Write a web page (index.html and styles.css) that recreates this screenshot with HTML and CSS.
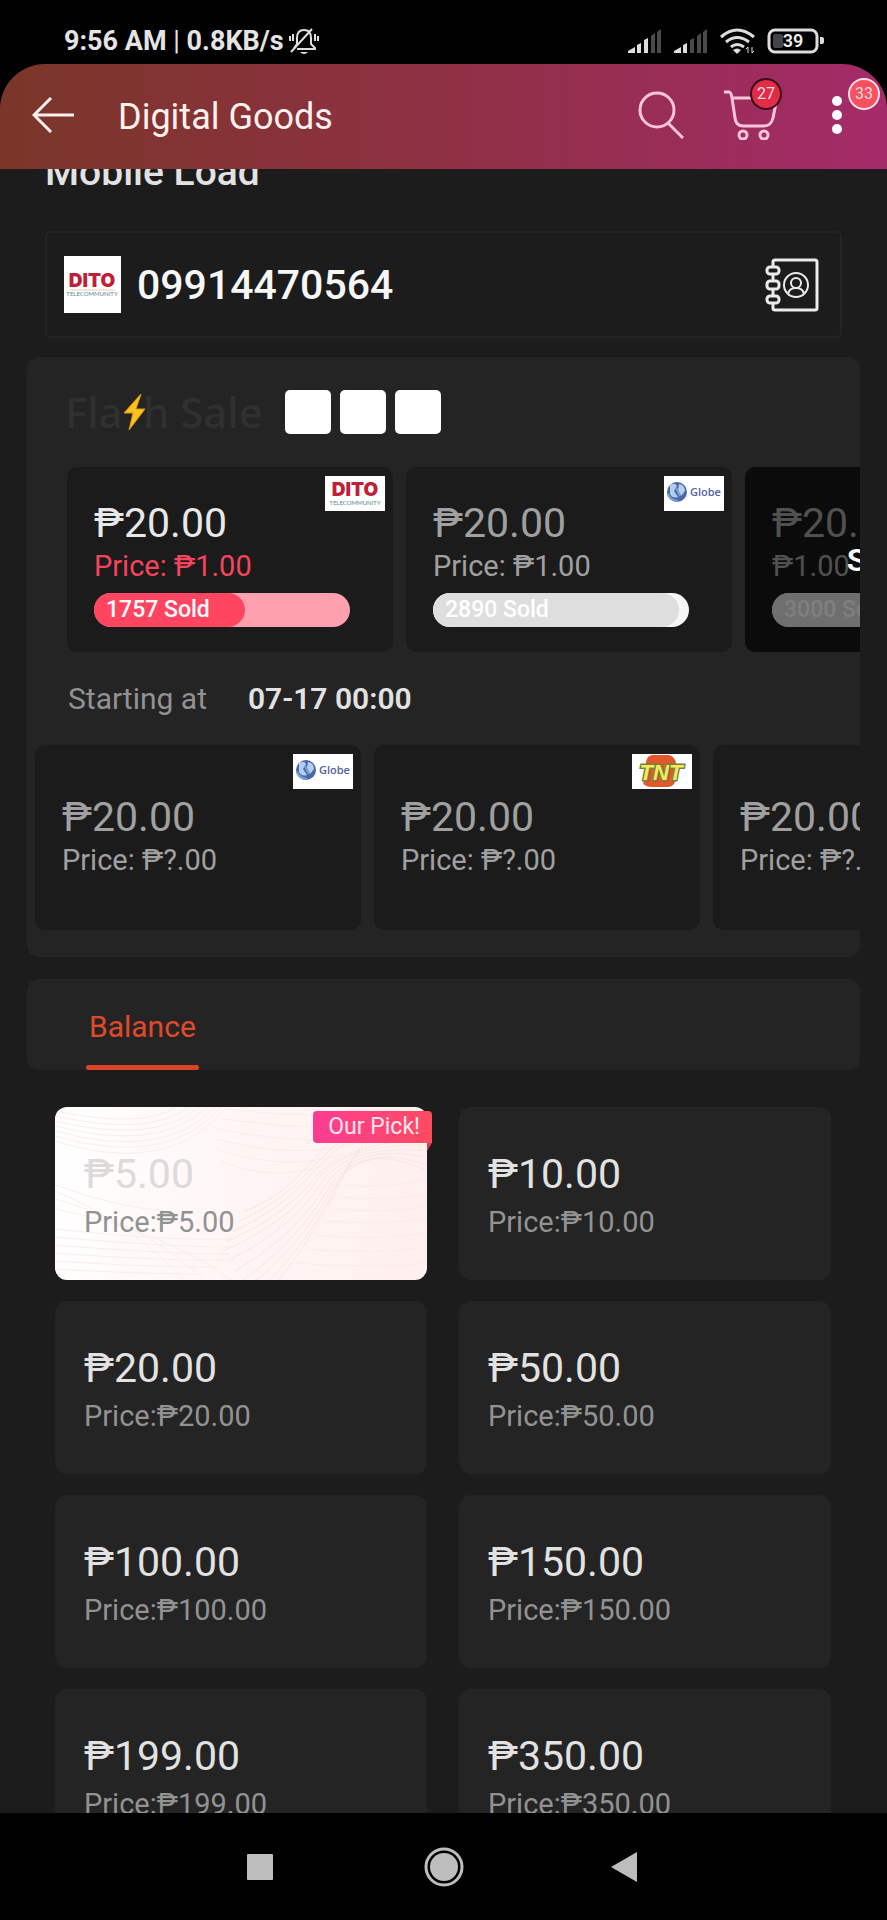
FILE: index.html
```html
<!DOCTYPE html>
<html lang="en">
<head>
<meta charset="utf-8">
<meta name="viewport" content="width=device-width, initial-scale=1">
<title>Digital Goods</title>
<link rel="stylesheet" href="styles.css">
</head>
<body>
<div class="status">
  <div class="status-side">
    <span class="clock">9:56 AM <span class="bar">|</span> 0.8KB/s</span>
    <svg width="30" height="28" viewBox="0 0 30 28" fill="none" stroke="#ddd" stroke-width="2">
      <path d="M5 21l3-4v-6q0-8 7-8t7 8v6l4 4v1H8M2 25L23 2M1 9v5M4 7v7M26 7v7M29 9v5"/>
      <path d="M11 25q4 4 8 0z" fill="#ddd" stroke="none"/>
    </svg>
  </div>
  <div class="status-side status-right">
    <svg width="34" height="24" viewBox="0 0 34 24">
      <path d="M0 24v-2l7-4v6zM9 24v-8l4-2v10zM16 24V11l4-2v15z" fill="#ddd"/>
      <path d="M23 24V7l4-3v20zM29 24V3l4-3v24z" fill="#4a4a4a"/>
    </svg>
    <svg width="34" height="24" viewBox="0 0 34 24">
      <path d="M0 24v-2l7-4v6zM9 24v-8l4-2v10z" fill="#ddd"/>
      <path d="M16 24V11l4-2v15zM23 24V7l4-3v20zM29 24V3l4-3v24z" fill="#4a4a4a"/>
    </svg>
    <svg width="35" height="26" viewBox="0 0 35 26" fill="none" stroke="#ddd" stroke-width="3">
      <path d="M1 9Q17-5 34 9M6 14q11-9 23 0M11 19q6-5 13 0"/>
      <path d="M13 22q4-3 8 0l-4 4z" fill="#ddd" stroke="none"/>
      <path d="M28 25v-6l-2 2M32 19v6l2-2" stroke-width="1"/>
    </svg>
    <svg width="57" height="26" viewBox="0 0 57 26">
      <rect x="2" y="2" width="48" height="22" rx="6" fill="none" stroke="#ddd" stroke-width="3"/>
      <rect x="6" y="6" width="10" height="14" rx="2" fill="#444"/>
      <path d="M53 9h2q2 0 2 2v3q0 2-2 2h-2z" fill="#ddd"/>
      <text class="battery" x="26" y="19" text-anchor="middle">39</text>
    </svg>
  </div>
</div>

<header class="header">
  <button class="icon-btn" aria-label="Back">
    <svg width="42" height="36" viewBox="0 0 42 36" fill="none" stroke="#fff0ee" stroke-width="3"><path d="M42 18H2M19 1L2 18l17 17"/></svg>
  </button>
  <h1 class="page-title">Digital Goods</h1>
  <button class="icon-btn" aria-label="Search">
    <svg width="46" height="48" viewBox="0 0 46 48" fill="none" stroke="#ffc4da" stroke-width="3"><circle cx="19" cy="19" r="17"/><path d="M30 32l15 15"/></svg>
  </button>
  <button class="icon-btn cart" aria-label="Cart">
    <svg width="54" height="50" viewBox="0 0 54 50" fill="none" stroke="#ffc4da" stroke-width="3"><path d="M0 2h5q2 0 3 6h45l-4 20q-2 8-9 8H19q-7 0-8-8L8 8"/><circle cx="19" cy="45" r="4"/><circle cx="40" cy="45" r="4"/></svg>
    <span class="badge badge-dark">27</span>
  </button>
  <button class="icon-btn more" aria-label="More">
    <svg width="10" height="38" viewBox="0 0 10 38" fill="#fff"><circle cx="5" cy="5" r="5"/><circle cx="5" cy="19" r="5"/><circle cx="5" cy="33" r="5"/></svg>
    <span class="badge badge-light">33</span>
  </button>
</header>

<main class="content">
  <h2 class="section-title"><label for="phone">Mobile Load</label></h2>
  <div class="phone-box">
    <svg class="phone-logo" viewBox="0 0 57 57" role="img" aria-label="DITO">
      <rect width="57" height="57" fill="#fff"/>
      <text class="dito-name" x="28" y="31" text-anchor="middle">DITO</text>
      <path d="M6 34h45" stroke="#f0c9a8"/>
      <text class="dito-sub" x="28" y="40" text-anchor="middle">TELECOMMUNITY</text>
    </svg>
    <input class="phone" id="phone" type="tel" value="09914470564">
    <button class="icon-btn" aria-label="Contacts">
      <svg width="54" height="54" viewBox="0 0 54 54" fill="none" stroke="#ebebeb" stroke-width="3">
        <path d="M8 8V4q0-2 2-2h40q2 0 2 2v46q0 2-2 2H10q-2 0-2-2v-4M8 16v6M8 31v6"/>
        <rect x="2" y="9" width="12" height="7" rx="3"/><rect x="2" y="23" width="12" height="8" rx="3"/><rect x="2" y="38" width="12" height="7" rx="3"/>
        <circle cx="31" cy="27" r="12" stroke-width="2"/><circle cx="31" cy="25" r="5" stroke-width="2"/><path d="M23 36q1-6 8-6t8 6" stroke-width="2"/>
      </svg>
    </button>
  </div>

  <section class="flash">
    <div class="flash-head">
      <h2 class="flash-title">Fla<span class="bolt-slot">s<svg class="bolt" width="24" height="38" viewBox="0 0 24 38"><path d="M18 1L1 20h9L6 37 22 16h-9z" fill="#fcc21b" stroke="#d99a17" stroke-width="1"/></svg></span>h Sale</h2>
      <div class="timer"><span></span><span></span><span></span></div>
    </div>
    <div class="deals deals-now">
      <button class="deal hot">
        <svg class="brand" viewBox="0 0 60 35" role="img" aria-label="DITO">
          <rect width="60" height="35" fill="#fff"/>
          <text class="dito-name" x="30" y="20" text-anchor="middle">DITO</text>
          <text class="dito-sub" x="30" y="29" text-anchor="middle">TELECOMMUNITY</text>
        </svg>
        <span class="amount">₱20.00</span><span class="price">Price: ₱1.00</span>
        <span class="sold"><span class="sold-fill" style="width:59%"></span><span class="sold-text">1757 Sold</span></span>
      </button>
      <button class="deal">
        <svg class="brand" viewBox="0 0 60 35" role="img" aria-label="Globe">
          <rect width="60" height="35" fill="#fff"/>
          <circle cx="13" cy="16" r="10" fill="#4a68a8"/>
          <path d="M6 9q5-3 7 1l-3 5 4 6q-5 2-8-3zM15 8q6 1 6 7l-4 5-3-6z" fill="#b4cdec"/>
          <path d="M4 18q3 7 10 7M12 12l4 8" fill="none" stroke="#7c9fd2" stroke-width="2"/>
          <text class="globe-name" x="26" y="20">Globe</text>
        </svg>
        <span class="amount">₱20.00</span><span class="price">Price: ₱1.00</span>
        <span class="sold"><span class="sold-fill" style="width:96%"></span><span class="sold-text">2890 Sold</span></span>
      </button>
      <button class="deal" disabled>
        <span class="amount">₱20.00</span><span class="price">₱1.00</span>
        <span class="sold"><span class="sold-fill" style="width:100%"></span><span class="sold-text">3000 Sold</span></span>
        <span class="sold-out"><span>Sold Out</span></span>
      </button>
    </div>
    <p class="starting">Starting at <strong>07-17 00:00</strong></p>
    <div class="deals deals-next">
      <button class="deal">
        <svg class="brand" viewBox="0 0 60 35" role="img" aria-label="Globe">
          <rect width="60" height="35" fill="#fff"/>
          <circle cx="13" cy="16" r="10" fill="#4a68a8"/>
          <path d="M6 9q5-3 7 1l-3 5 4 6q-5 2-8-3zM15 8q6 1 6 7l-4 5-3-6z" fill="#b4cdec"/>
          <path d="M4 18q3 7 10 7M12 12l4 8" fill="none" stroke="#7c9fd2" stroke-width="2"/>
          <text class="globe-name" x="26" y="20">Globe</text>
        </svg>
        <span class="amount">₱20.00</span><span class="price">Price: ₱?.00</span>
      </button>
      <button class="deal">
        <svg class="brand" viewBox="0 0 60 35" role="img" aria-label="TNT">
          <rect width="60" height="35" fill="#fff"/>
          <path d="M20 1h17q7 2 7 10v14q-1 7-8 8H19q-7-1-8-4l2-3 1-18q1-6 6-7z" fill="#e2572b"/>
          <text class="tnt-name" x="29" y="26" text-anchor="middle">TNT</text>
        </svg>
        <span class="amount">₱20.00</span><span class="price">Price: ₱?.00</span>
      </button>
      <button class="deal"><span class="amount">₱20.00</span><span class="price">Price: ₱?.00</span></button>
    </div>
  </section>

  <nav class="tabs"><button class="tab">Balance</button></nav>

  <section class="loads">
    <button class="load pick">
      <svg class="waves" viewBox="0 0 372 173" preserveAspectRatio="none" fill="none">
        <g stroke="#faece8">
          <path d="M0 4Q90 22 120 0M0 9Q95 30 134 0M0 14Q100 38 144 0M0 19Q105 46 152 0M0 24Q110 54 160 0M0 29Q112 62 166 0M0 34Q115 70 172 0"/>
          <path d="M172 2Q270 14 372 4M168 12Q270 28 372 14M164 22Q260 42 340 26M162 32Q240 54 310 34M162 42Q230 66 290 46M166 54Q220 76 270 58"/>
          <path d="M0 78Q60 100 110 104M0 84Q70 112 130 173M0 92Q90 118 150 173M0 102Q110 124 176 173M0 122Q110 134 180 132M0 130Q110 140 180 140M0 138Q110 147 176 147M0 146Q110 154 170 153M0 154Q110 161 164 160M0 162Q90 167 150 167"/>
          <path d="M290 78Q330 82 372 72M284 90Q330 94 372 88M276 102Q330 106 372 100M268 114Q330 118 372 112M260 128Q320 134 372 126M250 142Q320 148 372 140M240 156Q320 162 372 156"/>
        </g>
        <g stroke="#f7dfdd" stroke-dasharray="3 1">
          <path d="M190 104Q222 92 246 66T280 30M184 114Q222 98 250 68T292 30M178 124Q224 104 254 70T304 30M172 134Q228 110 258 73T372 32M168 144Q232 116 260 76T372 38M172 154Q236 122 264 79T372 44M180 164Q240 128 268 82T372 50M188 173Q242 134 272 84T372 58M202 173Q246 136 276 84T372 64M214 173Q252 136 280 82T330 30M224 173Q258 130 284 78T320 30"/>
        </g>
      </svg>
      <span class="ribbon">Our Pick!</span>
      <span class="amount">₱5.00</span><span class="price">Price:₱5.00</span>
    </button>
    <button class="load"><span class="amount">₱10.00</span><span class="price">Price:₱10.00</span></button>
    <button class="load"><span class="amount">₱20.00</span><span class="price">Price:₱20.00</span></button>
    <button class="load"><span class="amount">₱50.00</span><span class="price">Price:₱50.00</span></button>
    <button class="load"><span class="amount">₱100.00</span><span class="price">Price:₱100.00</span></button>
    <button class="load"><span class="amount">₱150.00</span><span class="price">Price:₱150.00</span></button>
    <button class="load"><span class="amount">₱199.00</span><span class="price">Price:₱199.00</span></button>
    <button class="load"><span class="amount">₱350.00</span><span class="price">Price:₱350.00</span></button>
  </section>
</main>

<nav class="sysnav">
  <button class="icon-btn" aria-label="Recent apps"><svg width="40" height="40" viewBox="0 0 40 40"><rect x="7" y="7" width="26" height="26" rx="1" fill="#bdbdbd"/></svg></button>
  <button class="icon-btn" aria-label="Home"><svg width="40" height="40" viewBox="0 0 40 40"><circle cx="20" cy="20" r="18" fill="none" stroke="#bdbdbd" stroke-width="3"/><circle cx="20" cy="20" r="14" fill="#bdbdbd"/></svg></button>
  <button class="icon-btn" aria-label="Go back"><svg width="40" height="40" viewBox="0 0 40 40"><path d="M30 5v30L4 20z" fill="#bdbdbd"/></svg></button>
</nav>
</body>
</html>
```
FILE: styles.css
```css
* { box-sizing: border-box; }
body {
  margin: 0;
  height: 100vh;
  display: flex;
  flex-direction: column;
  overflow: hidden;
  background: #000;
  color: #e2e2e2;
  font-family: Roboto, "Noto Sans", sans-serif;
}
button, input {
  margin: 0;
  padding: 0;
  border: 0;
  background: none;
  color: inherit;
  font-family: inherit;
  text-align: left;
}
h1, h2, p { margin: 0; }
svg { display: block; }
.icon-btn { position: relative; flex: none; }

.status {
  flex: none;
  height: 64px;
  padding: 18px 63px 0 64px;
  display: flex;
  justify-content: space-between;
}
.status-side { display: flex; align-items: center; gap: 5px; height: 46px; }
.status-right { gap: 12px; }
.clock { font-size: 27px; font-weight: 700; color: #e4e4e4; }
.bar { font-weight: 400; }
.battery { font-size: 18px; font-weight: 600; fill: #eee; }

.header {
  flex: none;
  height: 105px;
  padding: 0 45px 4px 32px;
  display: flex;
  align-items: center;
  border-radius: 45px 45px 0 0;
  background: linear-gradient(90deg, #7a3628, #8f3044 50%, #a42b69);
}
.page-title {
  flex: 1;
  margin-left: 44px;
  padding-top: 4px;
  font-size: 36px;
  font-weight: 400;
  line-height: 44px;
  color: #fff0ee;
}
.cart { margin-left: 40px; }
.more { margin-left: 54px; }
.badge {
  position: absolute;
  width: 32px;
  height: 32px;
  border-radius: 50%;
  font-size: 16px;
  line-height: 28px;
  text-align: center;
  color: #ffd9df;
}
.badge-dark { left: 26px; top: -12px; border: 2px solid #3a0c16; background: #e02c48; }
.badge-light { left: 16px; top: -18px; border: 2px solid #ffe0e6; background: #f8505f; }

.content {
  flex: 1;
  min-height: 0;
  overflow: hidden;
  padding: 0 27px;
  background: #1c1c1c;
}
.section-title {
  margin: -20px 18px 36px;
  font-size: 39px;
  font-weight: 500;
  line-height: 46px;
}
.phone-box {
  height: 107px;
  margin: 0 18px 19px;
  padding: 0 21px 0 17px;
  display: flex;
  align-items: center;
  gap: 16px;
  border: 2px solid #242424;
  border-radius: 6px;
}
.phone-logo { width: 57px; height: 57px; flex: none; }
.phone {
  flex: 1;
  min-width: 0;
  font-size: 41px;
  font-weight: 500;
  line-height: 48px;
  color: #f6f6f6;
}
.dito-name { font: 900 19px Inter, sans-serif; fill: #bf2038; }
.dito-sub { font: 400 6px Lato, sans-serif; fill: #5c86a0; }
.globe-name { font: 600 11px "Open Sans", sans-serif; fill: #5560a4; }
.tnt-name {
  font: italic 700 22px "Liberation Sans", sans-serif;
  fill: #f6ea5c;
  stroke: #77803c;
  stroke-width: 3px;
  paint-order: stroke;
}

.flash {
  margin-bottom: 22px;
  padding: 30px 0 27px;
  border-radius: 12px;
  background: #242424;
  overflow: hidden;
}
.flash-head {
  display: flex;
  align-items: center;
  gap: 22px;
  height: 50px;
  margin-bottom: 30px;
  padding-left: 38px;
}
.flash-title { font: 500 42px/50px "Noto Sans", sans-serif; color: #303033; }
.bolt-slot { position: relative; color: transparent; }
.bolt { position: absolute; left: 0; top: 10px; }
.timer { display: flex; gap: 9px; }
.timer span { width: 46px; height: 44px; border-radius: 5px; background: #fff; }

.deals { display: flex; gap: 13px; overflow: hidden; }
.deals-now { padding-left: 40px; }
.deals-next { padding-left: 8px; }
.deal {
  position: relative;
  flex: none;
  width: 326px;
  height: 185px;
  padding: 32px 27px 0;
  display: flex;
  flex-direction: column;
  justify-content: flex-start;
  border-radius: 10px;
  overflow: hidden;
  background: #1b1b1b;
  color: #a0a0a0;
}
.deals-next .deal { padding-top: 48px; }
.brand { position: absolute; top: 9px; right: 8px; width: 60px; height: 35px; }
.amount { font-size: 41px; line-height: 48px; }
.price { font-size: 29px; line-height: 38px; }
.hot { color: #f4455d; }
.hot .amount { color: #e8e8e8; }
.sold {
  position: relative;
  width: 256px;
  height: 34px;
  margin-top: 8px;
  border-radius: 17px;
  background: #f6f6f6;
}
.sold-fill { display: block; height: 34px; border-radius: 17px; background: #dedede; }
.hot .sold { background: #ffa0ae; }
.hot .sold-fill { background: #ff4560; }
.sold-text {
  position: absolute;
  left: 12px;
  top: 0;
  font-size: 23px;
  font-weight: 500;
  line-height: 34px;
  color: #fff;
}
.sold-out {
  position: absolute;
  inset: 0;
  display: flex;
  align-items: center;
  justify-content: center;
  background: rgba(0, 0, 0, .5);
  font-size: 32px;
  font-weight: 600;
  color: #fff;
}
.deal:disabled { background: #161616; }
.starting {
  display: flex;
  gap: 41px;
  margin: 28px 0 27px;
  padding-left: 41px;
  font-size: 30px;
  line-height: 38px;
  color: #929292;
}
.starting strong { font-weight: 600; color: #e2e2e2; }

.tabs {
  display: flex;
  height: 91px;
  margin-bottom: 37px;
  padding-left: 59px;
  border-radius: 12px;
  background: #242424;
}
.tab {
  position: relative;
  padding: 4px 3px 0;
  font-size: 30px;
  color: #e04a2a;
}
.tab::after {
  content: "";
  position: absolute;
  left: 0;
  right: 0;
  bottom: 0;
  height: 5px;
  border-radius: 3px;
  background: #dc4326;
}

.loads {
  display: grid;
  grid-template-columns: 1fr 1fr;
  gap: 21px 32px;
  padding: 0 29px 0 28px;
}
.load {
  position: relative;
  height: 173px;
  padding: 43px 29px 0;
  display: flex;
  flex-direction: column;
  justify-content: flex-start;
  border-radius: 12px;
  background: #242424;
}
.load .price { margin-top: 5px; color: #929292; }
.load > span { position: relative; }
.pick { background: linear-gradient(100deg, #fff, #fff5f5 50%, #fff0ef); }
.pick .amount { color: #dcdadc; }
.waves { position: absolute; inset: 0; width: 100%; height: 100%; border-radius: 12px; overflow: hidden; }
.load > .ribbon {
  position: absolute;
  top: 4px;
  right: -5px;
  padding: 0 12px 0 15px;
  border-radius: 4px 4px 0 4px;
  background: linear-gradient(90deg, #ff3c93, #ff4a60);
  font-size: 23px;
  line-height: 32px;
  color: #ffe6f0;
}
.ribbon::after {
  content: "";
  position: absolute;
  top: 100%;
  right: 0;
  border-top: 8px solid #d83a55;
  border-right: 5px solid transparent;
}

.sysnav {
  flex: none;
  height: 107px;
  padding: 0 240px;
  display: flex;
  align-items: center;
  justify-content: space-between;
}
```
